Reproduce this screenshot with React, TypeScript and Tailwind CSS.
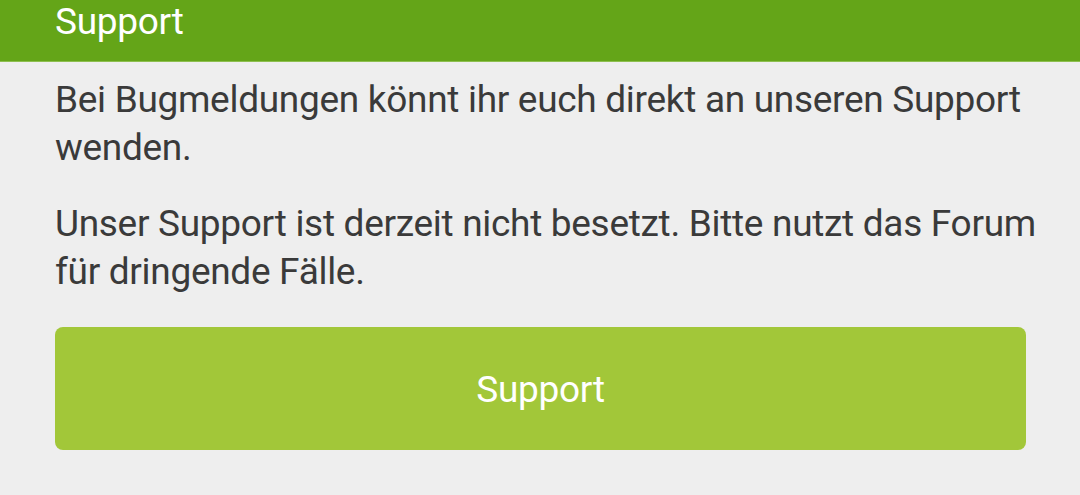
export default function App() {
  return (
    <div
      className="min-h-[495px] bg-[#eeeeee] text-[37px] leading-[48px] tracking-[-0.3px]"
      style={{ fontFamily: 'Roboto, "Noto Sans", sans-serif' }}
    >
      <div className="h-[62px] overflow-hidden bg-[#64a518] border-b border-[#8dbf4f] px-[55px]">
        <h1 className="-mt-[2px] text-white">Support</h1>
      </div>

      <div className="pl-[55px] pr-[30px] pt-[14px] text-[#3a3a3a]">
        <p>Bei Bugmeldungen könnt ihr euch direkt an unseren Support wenden.</p>
        <p className="mt-[28px]">
          Unser Support ist derzeit nicht besetzt. Bitte nutzt das Forum für dringende Fälle.
        </p>

        <button className="mt-[31px] flex h-[123px] w-[971px] items-center justify-center rounded-[8px] bg-[#a2c739] pt-[2px] text-white">
          Support
        </button>
      </div>
    </div>
  )
}
